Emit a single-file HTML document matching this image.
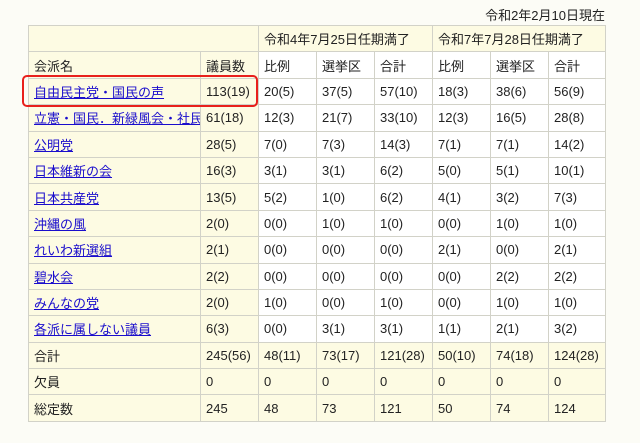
<!DOCTYPE html>
<html><head><meta charset="utf-8"><style>
body{margin:0;background:#fcfcf6;font-family:"Liberation Sans","Noto Sans CJK JP",sans-serif;font-size:13px;color:#222;position:relative;width:640px;height:443px;overflow:hidden}
.date{position:absolute;top:5px;right:35px;}
table{position:absolute;left:28px;top:25px;border-collapse:collapse;table-layout:fixed;width:577px}
td{border:1px solid #d2d2c8;height:25.4px;padding:0 0 0 5px;background:#fff;white-space:nowrap;overflow:hidden}
td.y,tr.y td{background:#fdfbe3}
a{color:#1a0dcc;text-decoration:underline}
.box{position:absolute;left:22px;top:75px;width:232px;height:28px;border:2px solid #e8201c;border-radius:5px}
</style></head><body>
<div class="date">令和2年2月10日現在</div>
<table>
<colgroup><col style="width:172px"><col style="width:58px"><col style="width:58px"><col style="width:58px"><col style="width:58px"><col style="width:58px"><col style="width:58px"><col style="width:57px"></colgroup>
<tr class="y"><td colspan="2"></td><td colspan="3">令和4年7月25日任期満了</td><td colspan="3">令和7年7月28日任期満了</td></tr>
<tr><td class="y">会派名</td><td class="y">議員数</td><td>比例</td><td>選挙区</td><td>合計</td><td>比例</td><td>選挙区</td><td>合計</td></tr>
<tr><td class="y"><a>自由民主党・国民の声</a></td><td class="y">113(19)</td><td>20(5)</td><td>37(5)</td><td>57(10)</td><td>18(3)</td><td>38(6)</td><td>56(9)</td></tr>
<tr><td class="y"><a>立憲・国民．新緑風会・社民</a></td><td class="y">61(18)</td><td>12(3)</td><td>21(7)</td><td>33(10)</td><td>12(3)</td><td>16(5)</td><td>28(8)</td></tr>
<tr><td class="y"><a>公明党</a></td><td class="y">28(5)</td><td>7(0)</td><td>7(3)</td><td>14(3)</td><td>7(1)</td><td>7(1)</td><td>14(2)</td></tr>
<tr><td class="y"><a>日本維新の会</a></td><td class="y">16(3)</td><td>3(1)</td><td>3(1)</td><td>6(2)</td><td>5(0)</td><td>5(1)</td><td>10(1)</td></tr>
<tr><td class="y"><a>日本共産党</a></td><td class="y">13(5)</td><td>5(2)</td><td>1(0)</td><td>6(2)</td><td>4(1)</td><td>3(2)</td><td>7(3)</td></tr>
<tr><td class="y"><a>沖縄の風</a></td><td class="y">2(0)</td><td>0(0)</td><td>1(0)</td><td>1(0)</td><td>0(0)</td><td>1(0)</td><td>1(0)</td></tr>
<tr><td class="y"><a>れいわ新選組</a></td><td class="y">2(1)</td><td>0(0)</td><td>0(0)</td><td>0(0)</td><td>2(1)</td><td>0(0)</td><td>2(1)</td></tr>
<tr><td class="y"><a>碧水会</a></td><td class="y">2(2)</td><td>0(0)</td><td>0(0)</td><td>0(0)</td><td>0(0)</td><td>2(2)</td><td>2(2)</td></tr>
<tr><td class="y"><a>みんなの党</a></td><td class="y">2(0)</td><td>1(0)</td><td>0(0)</td><td>1(0)</td><td>0(0)</td><td>1(0)</td><td>1(0)</td></tr>
<tr><td class="y"><a>各派に属しない議員</a></td><td class="y">6(3)</td><td>0(0)</td><td>3(1)</td><td>3(1)</td><td>1(1)</td><td>2(1)</td><td>3(2)</td></tr>
<tr class="y"><td>合計</td><td>245(56)</td><td>48(11)</td><td>73(17)</td><td>121(28)</td><td>50(10)</td><td>74(18)</td><td>124(28)</td></tr>
<tr class="y"><td>欠員</td><td>0</td><td>0</td><td>0</td><td>0</td><td>0</td><td>0</td><td>0</td></tr>
<tr class="y"><td>総定数</td><td>245</td><td>48</td><td>73</td><td>121</td><td>50</td><td>74</td><td>124</td></tr>
</table>
<div class="box"></div>
</body></html>
